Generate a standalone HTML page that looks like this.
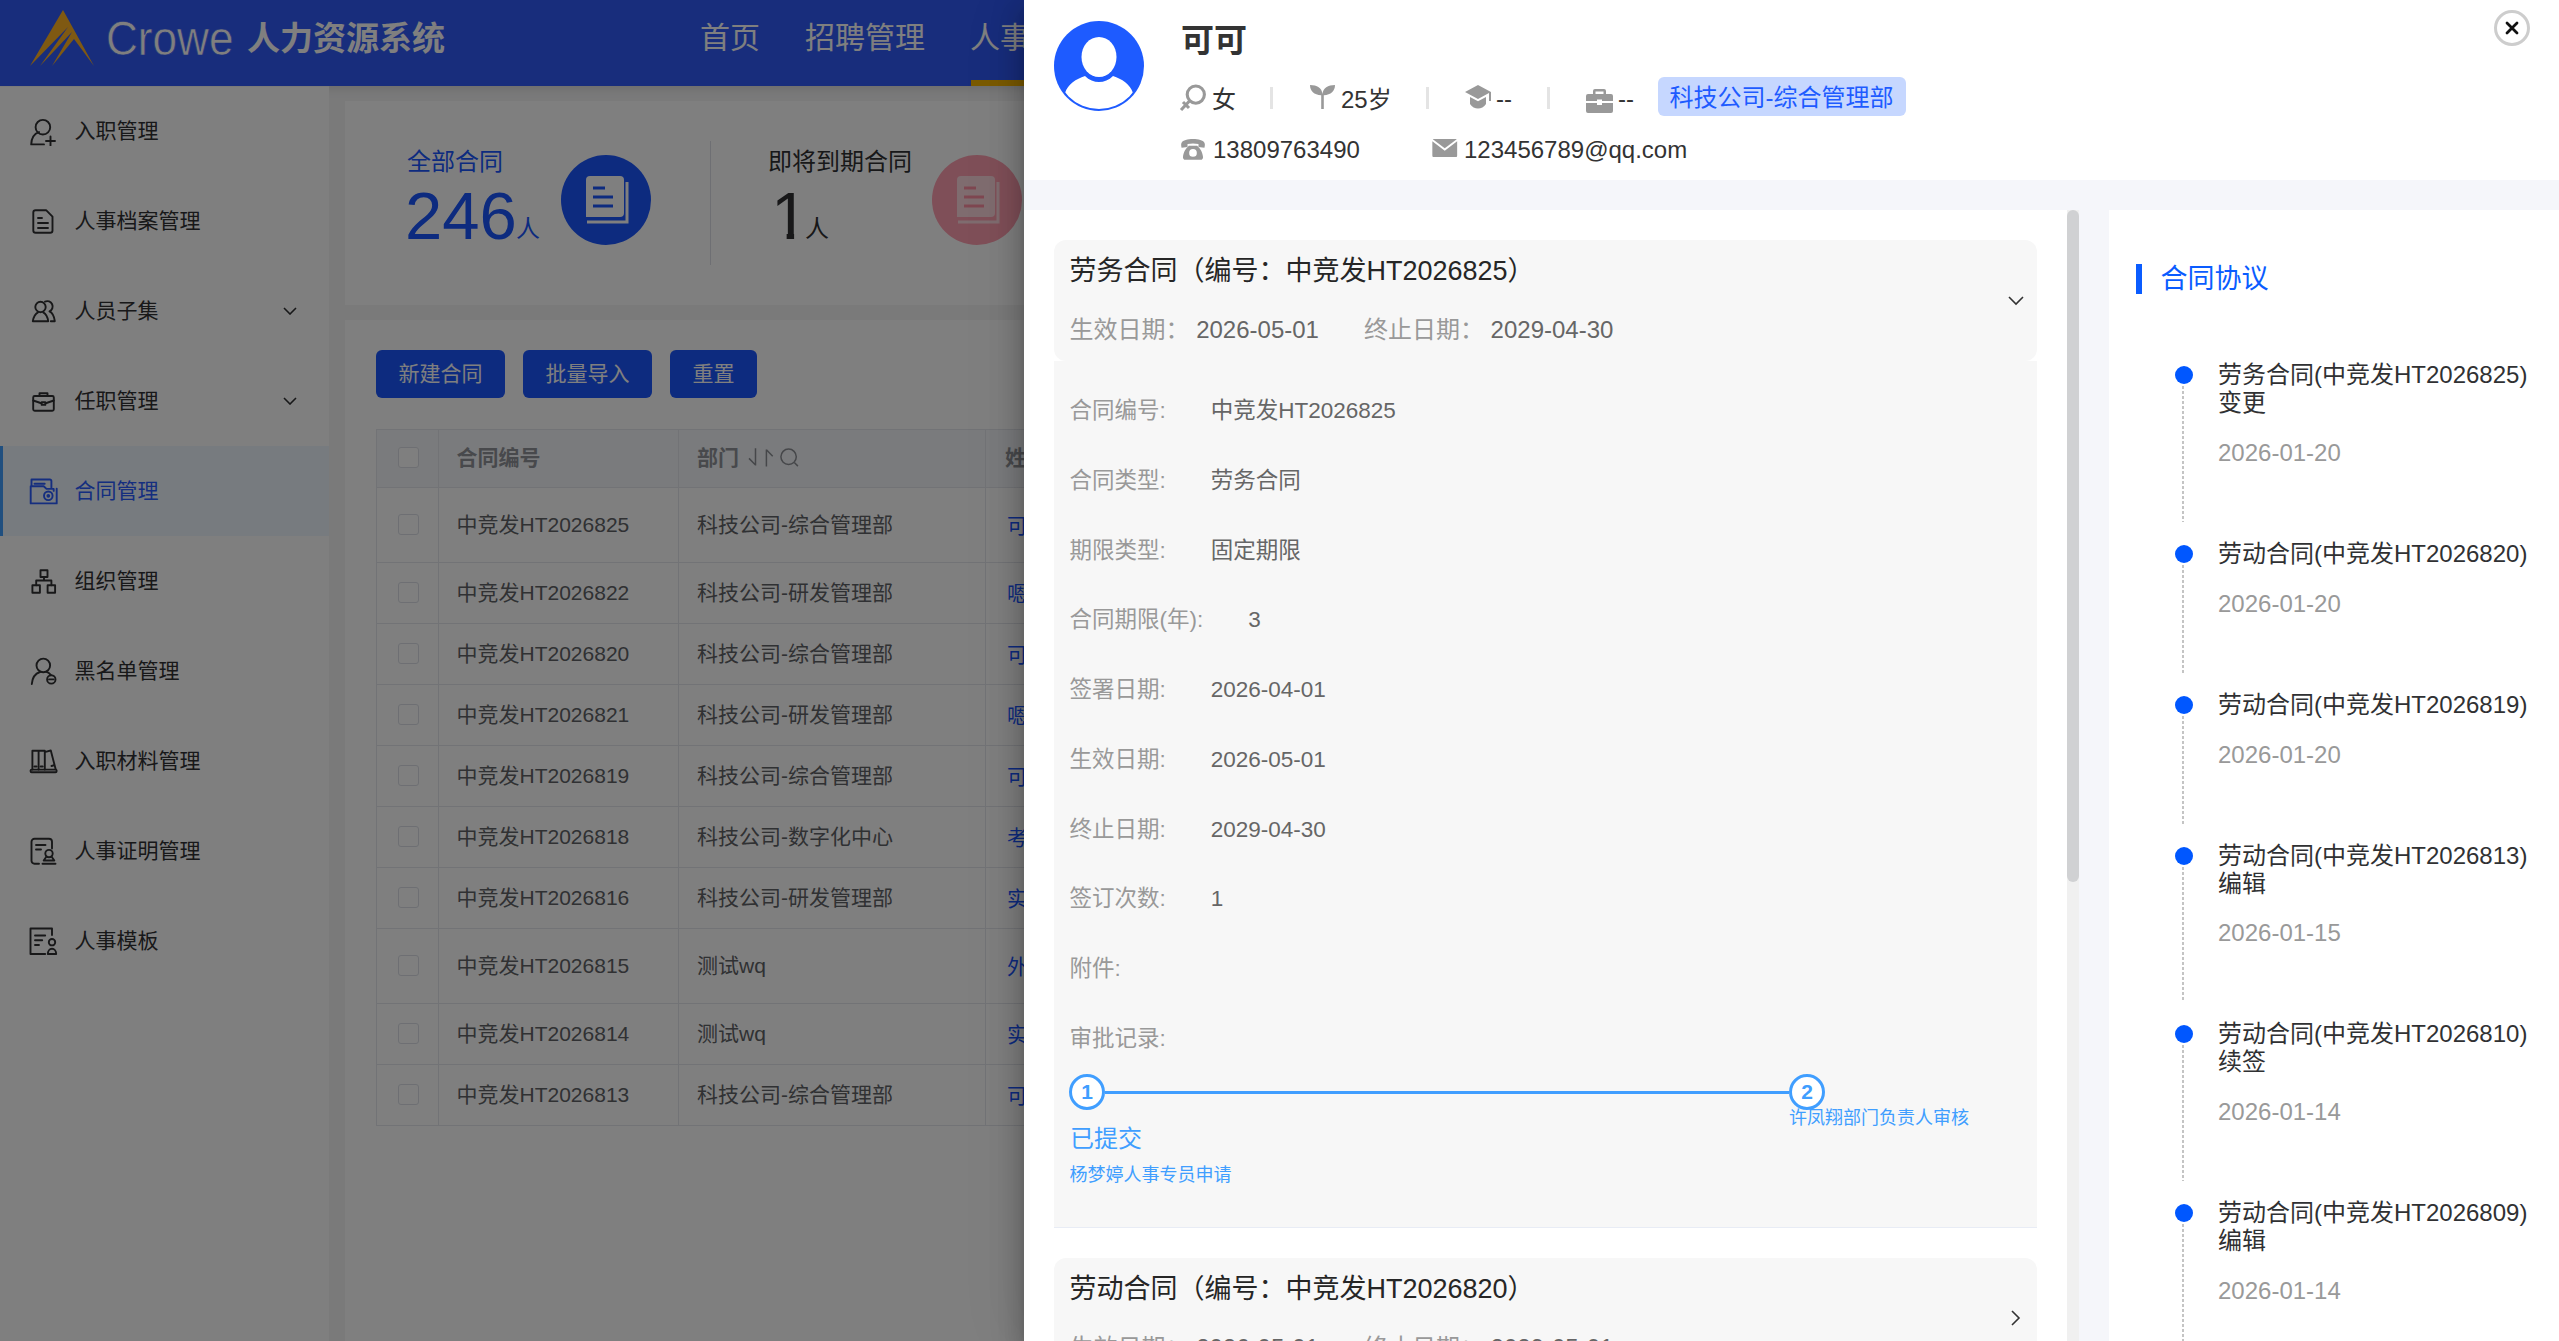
<!DOCTYPE html>
<html lang="zh-CN">
<head>
<meta charset="utf-8">
<title>人力资源系统</title>
<style>
*{box-sizing:border-box;margin:0;padding:0}
html,body{width:2559px;height:1341px;overflow:hidden;background:#f4f4f5}
body{position:relative;font-family:"Liberation Sans","Noto Sans CJK SC",sans-serif;color:#303133;-webkit-font-smoothing:antialiased}
.abs{position:absolute}
.t{position:absolute;white-space:nowrap;line-height:1;transform:translateY(-50%)}
/* ---------- background app ---------- */
#hdr{position:absolute;left:0;top:0;width:2559px;height:86px;background:#315bf8;box-shadow:0 2px 10px rgba(0,0,0,.13);z-index:2}
#side{position:absolute;left:0;top:86px;width:329px;height:1255px;background:#fff;z-index:3;border-top:1px solid #f4f4f4}
.mi{position:absolute;left:0;width:329px;height:90px;margin-top:-1px}
.mi .t{left:74.5px;top:43.5px;font-size:21px;color:#303133}
.mi svg.ic{position:absolute;left:28px;top:30px;width:30px;height:30px;fill:none;stroke:#303133;stroke-width:1.9;stroke-linecap:round;stroke-linejoin:round}
.mi svg.ar{position:absolute;left:283px;top:41px;width:14px;height:8px;fill:none;stroke:#303133;stroke-width:1.6}
.mi.on{background:#eef6ff;border-left:3px solid #409eff}
.mi.on .t{color:#2a5cff;left:71.5px}
.mi.on svg.ic{stroke:#2a5cff;left:25px}
.card{position:absolute;background:#fff}
.btn{position:absolute;top:350px;height:48px;background:#1a56ff;border-radius:6px;color:#fff;font-size:21px;line-height:48px;text-align:center}
#tbl{position:absolute;left:376px;top:428.5px;width:700px;height:697px;border:1px solid #e4e7ed;border-right:0;background:#fff}
.tr{position:absolute;left:0;width:700px;border-bottom:1px solid #e4e7ed}
.tr .t{font-size:21px;color:#606266;top:calc(50% - 1px)}
.th{background:#f5f7fa}
.th .t{font-weight:bold;color:#909399}
.vl{position:absolute;top:0;width:1px;height:695px;background:#e4e7ed}
.cb{position:absolute;left:21px;top:50%;margin-top:-11px;width:21px;height:21px;border:1px solid #dcdfe6;border-radius:3px;background:#fff}
.lk{color:#1a56ff !important;margin-top:1.5px}
#mask{position:absolute;left:0;top:0;width:2559px;height:1341px;background:rgba(0,0,0,.5);z-index:5}
/* ---------- drawer ---------- */
#dr{position:absolute;left:1024px;top:0;width:1535px;height:1341px;background:#f5f6fa;z-index:10;box-shadow:0 8px 10px -5px rgba(0,0,0,.2),0 16px 24px 2px rgba(0,0,0,.14),0 6px 30px 5px rgba(0,0,0,.12),-10px 0 60px 0 rgba(0,0,0,.055);overflow:hidden}
#dr .t{color:#303133}

.dv{position:absolute;top:87px;width:2.5px;height:22px;background:#e4e4e4}
.v{color:#666}
.rw{left:45.5px;font-size:22.5px;color:#999 !important;margin-top:1px}
.rw .v{margin-left:45px}
.stp{position:absolute;top:1074px;width:36px;height:36px;border-radius:50%;border:3px solid #409eff;background:#fff;color:#409eff;font-weight:bold;font-size:21px;line-height:30px;text-align:center}
.dot{position:absolute;left:1151px;width:18px;height:18px;border-radius:50%;background:#0057ff}
.tail{position:absolute;left:1158px;width:2px;background:repeating-linear-gradient(to bottom,#c4c4c4 0,#c4c4c4 3px,transparent 3px,transparent 5px)}
.tlt{left:1194px;font-size:24px;color:#303133}
.tld{left:1194px;font-size:24px;color:#999 !important}
</style>
</head>
<body>
<!-- HEADER -->
<div id="hdr">
  <svg class="abs" style="left:28px;top:8px" width="68" height="60" viewBox="0 0 68 60"><path d="M35 2 L66 58 L46 31 L24 58 L44 24 L12 58 L40 19 L2 58 Z" fill="#ffb224"/></svg>
  <div class="t" style="left:106px;top:37.5px;font-size:49px;color:#fff;-webkit-text-stroke:.6px #315bf8;transform:translateY(-50%) scaleX(.9);transform-origin:0 50%">Crowe</div>
  <div class="t" style="left:247px;top:38px;font-size:33px;font-weight:bold;color:#fff">人力资源系统</div>
  <div class="t" style="left:700px;top:37.5px;font-size:30px;color:#fff">首页</div>
  <div class="t" style="left:805px;top:37.5px;font-size:30px;color:#fff">招聘管理</div>
  <div class="t" style="left:970px;top:37.5px;font-size:30px;color:#fff">人事管理</div>
  <div class="abs" style="left:971px;top:80px;width:118px;height:6px;background:#f5b400"></div>
</div>
<!-- SIDEBAR -->
<div id="side">
  <div class="mi" style="top:0px"><svg class="ic" viewBox="0 0 30 30"><circle cx="14.9" cy="11.2" r="7.3"/><path d="M3.200 28.400c.200-6.800 3.400-10.800 7.800-12.300M3.200 28.400h12.800M22.500 20.500v9M18 25h9"/></svg><div class="t">入职管理</div></div>
  <div class="mi" style="top:90px"><svg class="ic" viewBox="0 0 30 30"><path d="M5.300 6.500a2.300 2.300 0 0 1 2.300-2.300h10.500l6.400 6.400v13.800a2.300 2.300 0 0 1-2.300 2.300H7.600a2.300 2.300 0 0 1-2.300-2.300zM10 12h4M10 17h10M10 22h10"/></svg><div class="t">人事档案管理</div></div>
  <div class="mi" style="top:180px"><svg class="ic" viewBox="0 0 30 30"><circle cx="12.500" cy="11" r="5.200"/><path d="M4.800 25.200c.8-4.500 2.800-7.500 5.200-8.800M4.800 25.200h15.400c-.6-4.300-2.400-7.300-5-8.800M17 5.600a5.200 5.200 0 0 1 4.500 9.800c2.700 1.400 4.700 4.600 5.300 9.800h-4"/></svg><div class="t">人员子集</div><svg class="ar" viewBox="0 0 14 8"><path d="M1 1l6 6 6-6"/></svg></div>
  <div class="mi" style="top:270px"><svg class="ic" viewBox="0 0 30 30"><rect x="5.200" y="10" width="20.600" height="14.700" rx="1.500"/><path d="M11.500 10V7.200h8V10M5.200 14.500l10.300 3.500 10.300-3.500"/><path d="M13.700 16.300h3.600v2.600h-3.600z" fill="#fff"/></svg><div class="t">任职管理</div><svg class="ar" viewBox="0 0 14 8"><path d="M1 1l6 6 6-6"/></svg></div>
  <div class="mi on" style="top:360px"><svg class="ic" viewBox="0 0 30 30"><path d="M3.500 10V3.500h18.400a1.500 1.500 0 0 1 1.500 1.500v7.500M6.500 7.700h10.200M2.700 10.300h13l2.800 2.600h7.200v2M28.700 12.600v14.800h-26V10.300"/><circle cx="20.300" cy="19.800" r="4.300"/><circle cx="20.300" cy="19.800" r=".9" fill="#2a5cff"/></svg><div class="t">合同管理</div></div>
  <div class="mi" style="top:450px"><svg class="ic" viewBox="0 0 30 30"><rect x="12.500" y="4.300" width="7" height="6.700"/><rect x="4.400" y="19.200" width="7.500" height="7.500"/><rect x="19.600" y="19.200" width="7.500" height="7.500"/><path d="M16 11v3.500M8.200 19.200v-4.700h15.200v4.700"/></svg><div class="t">组织管理</div></div>
  <div class="mi" style="top:540px"><svg class="ic" viewBox="0 0 30 30"><circle cx="15.300" cy="9.400" r="6.800"/><path d="M3.800 28c.5-6.500 3.700-10.500 8.200-12M18.500 15.800c1.800.6 3.200 1.700 4.200 3.100"/><circle cx="23.300" cy="23.400" r="4.200"/><path d="M21 23.400h4.600"/></svg><div class="t">黑名单管理</div></div>
  <div class="mi" style="top:630px"><svg class="ic" viewBox="0 0 30 30"><path d="M4.400 23.600V4.800h6.200v18.800M10.600 4.800h6.200v18.800M17.500 5.800l5.300-1.300 4.800 18.600M6.500 20.500h2M12.700 20.500h2M23.500 20l1.800-.5"/><rect x="2.600" y="23.600" width="26" height="2.600" rx="1"/></svg><div class="t">入职材料管理</div></div>
  <div class="mi" style="top:720px"><svg class="ic" viewBox="0 0 30 30"><path d="M11 27.800H6.500a3 3 0 0 1-3-3V5.800a3 3 0 0 1 3-3H21a3 3 0 0 1 3 3v6.700M8 9h9.500M8 13.500h5"/><circle cx="21" cy="17.600" r="3.700"/><path d="M18.500 20.500l-2.800 4h10.600l-2.800-4M14.500 27.800h13"/></svg><div class="t">人事证明管理</div></div>
  <div class="mi" style="top:810px"><svg class="ic" viewBox="0 0 30 30"><path d="M17.200 28H2.500V2.500H24V9M7 9.500h10.200M7 14.300h7.200M7 19h4"/><circle cx="24" cy="16.200" r="3.200"/><path d="M19.800 28c0-3 1.800-5.200 4.200-5.200s4.200 2.200 4.200 5.200z"/></svg><div class="t">人事模板</div></div>
</div>
<!-- MAIN -->
<div class="card" style="left:345px;top:101px;width:2200px;height:204px">
  <div class="t" style="left:62px;top:61px;font-size:24px;color:#1a56ff">全部合同</div>
  <div class="t" style="left:60px;top:114px;font-size:67px;color:#1a56ff">246</div>
  <div class="t" style="left:171px;top:128px;font-size:24px;color:#1a56ff">人</div>
  <div class="abs" style="left:216px;top:54px;width:90px;height:90px;border-radius:50%;background:#1a56ff"></div>
  <svg class="abs" style="left:240px;top:74px" width="44" height="50" viewBox="0 0 44 50"><path d="M5 1h30a4 4 0 0 1 4 4v33a4 4 0 0 1-4 4H1V5a4 4 0 0 1 4-4z" fill="#fff"/><path d="M42 7v40H2" fill="none" stroke="#fff" stroke-width="3"/><path d="M8 13h12M8 22h20M8 31h20" stroke="#1a56ff" stroke-width="3"/></svg>
  <div class="abs" style="left:365px;top:40px;width:1px;height:124px;background:#dcdfe6"></div>
  <div class="t" style="left:423px;top:61px;font-size:24px;color:#303133">即将到期合同</div>
  <div class="t" style="left:426px;top:114px;font-size:67px;color:#303133;clip-path:polygon(0 0,100% 0,100% 75%,62% 75%,62% 100%,42% 100%,42% 75%,0 75%)">1</div>
  <div class="t" style="left:460px;top:128px;font-size:24px;color:#303133">人</div>
  <div class="abs" style="left:587px;top:54px;width:90px;height:90px;border-radius:50%;background:#ff9fb0"></div>
  <svg class="abs" style="left:611px;top:74px" width="44" height="50" viewBox="0 0 44 50"><path d="M5 1h30a4 4 0 0 1 4 4v33a4 4 0 0 1-4 4H1V5a4 4 0 0 1 4-4z" fill="#ffd9df"/><path d="M42 7v40H2" fill="none" stroke="#ffd9df" stroke-width="3"/><path d="M8 13h12M8 22h20M8 31h20" stroke="#ff8fa3" stroke-width="3"/></svg>
</div>
<div class="card" style="left:345px;top:320px;width:2200px;height:1040px"></div>
<div class="btn" style="left:376px;width:129px">新建合同</div>
<div class="btn" style="left:523px;width:129px">批量导入</div>
<div class="btn" style="left:670px;width:87px">重置</div>
<div id="tbl">
<div class="tr th" style="top:0;height:58px"><i class="cb"></i><div class="t" style="left:79.5px">合同编号</div><div class="t" style="left:320px">部门</div><svg class="abs" style="left:368px;top:16.5px" width="58" height="24" viewBox="0 0 58 24" fill="none" stroke="#8c8f95" stroke-width="1.5"><path d="M10.500 2.300V19.600M4 12.400l6.500 6.600M21.400 20.600V3.400M21.400 3.700l6.300 6.600"/><circle cx="43.600" cy="10.800" r="7.700"/><path d="M49.300 16.500l3.600 3.600"/></svg><div class="t" style="left:628px">姓名</div></div>
<div class="tr" style="top:58px;height:75px"><i class="cb"></i><div class="t" style="left:79.5px">中竞发HT2026825</div><div class="t" style="left:320px">科技公司-综合管理部</div><div class="t lk" style="left:630px">可可</div></div>
<div class="tr" style="top:133px;height:61px"><i class="cb"></i><div class="t" style="left:79.5px">中竞发HT2026822</div><div class="t" style="left:320px">科技公司-研发管理部</div><div class="t lk" style="left:630px">嗯嗯</div></div>
<div class="tr" style="top:194px;height:61px"><i class="cb"></i><div class="t" style="left:79.5px">中竞发HT2026820</div><div class="t" style="left:320px">科技公司-综合管理部</div><div class="t lk" style="left:630px">可可</div></div>
<div class="tr" style="top:255px;height:61px"><i class="cb"></i><div class="t" style="left:79.5px">中竞发HT2026821</div><div class="t" style="left:320px">科技公司-研发管理部</div><div class="t lk" style="left:630px">嗯嗯</div></div>
<div class="tr" style="top:316px;height:61px"><i class="cb"></i><div class="t" style="left:79.5px">中竞发HT2026819</div><div class="t" style="left:320px">科技公司-综合管理部</div><div class="t lk" style="left:630px">可可</div></div>
<div class="tr" style="top:377px;height:61px"><i class="cb"></i><div class="t" style="left:79.5px">中竞发HT2026818</div><div class="t" style="left:320px">科技公司-数字化中心</div><div class="t lk" style="left:630px">考勤</div></div>
<div class="tr" style="top:438px;height:61px"><i class="cb"></i><div class="t" style="left:79.5px">中竞发HT2026816</div><div class="t" style="left:320px">科技公司-研发管理部</div><div class="t lk" style="left:630px">实习生</div></div>
<div class="tr" style="top:499px;height:75px"><i class="cb"></i><div class="t" style="left:79.5px">中竞发HT2026815</div><div class="t" style="left:320px">测试wq</div><div class="t lk" style="left:630px">外包</div></div>
<div class="tr" style="top:574px;height:61px"><i class="cb"></i><div class="t" style="left:79.5px">中竞发HT2026814</div><div class="t" style="left:320px">测试wq</div><div class="t lk" style="left:630px">实习生</div></div>
<div class="tr" style="top:635px;height:61px"><i class="cb"></i><div class="t" style="left:79.5px">中竞发HT2026813</div><div class="t" style="left:320px">科技公司-综合管理部</div><div class="t lk" style="left:630px">可可</div></div>
<i class="vl" style="left:61px"></i>
<i class="vl" style="left:301px"></i>
<i class="vl" style="left:608px"></i>
</div>
<div id="mask"></div>
<!-- DRAWER -->
<div id="dr">
  <div class="abs" style="left:0;top:0;width:1535px;height:180px;background:#fff"></div>
  <!-- avatar -->
  <svg class="abs" style="left:30px;top:21px" width="90" height="90" viewBox="0 0 90 90"><defs><clipPath id="avc"><circle cx="45" cy="45" r="43"/></clipPath></defs><circle cx="45" cy="45" r="45" fill="#1e5bff"/><g clip-path="url(#avc)" fill="#fff"><ellipse cx="45" cy="36" rx="17.5" ry="20"/><path d="M11 72c3-9 11-14 20-17 4 4 9 6 14 6s10-2 14-6c9 3 17 8 20 17-8 10-20 17-34 17S19 82 11 72z"/></g></svg>
  <div class="t" style="left:157px;top:40px;font-size:33px;font-weight:bold;color:#333">可可</div>
  <!-- row 2 -->
  <svg class="abs" style="left:155px;top:84px" width="28" height="28" viewBox="0 0 28 28" fill="none" stroke="#999" stroke-width="3.1"><circle cx="16.8" cy="10.6" r="8.6"/><path d="M10.5 17L2 26M4 18l6 6"/></svg>
  <div class="t" style="left:188px;top:99.5px;font-size:24px;color:#333">女</div>
  <i class="dv" style="left:246px"></i>
  <svg class="abs" style="left:285px;top:84px" width="27" height="26" viewBox="0 0 27 26"><path d="M13.5 10C13 4 8 1 1 1c0 6 4 10 11.2 10.2V25h2.6V11.2C22 11 26 7 26 1 19 1 14 4 13.5 10z" fill="#999"/></svg>
  <div class="t" style="left:317px;top:99.5px;font-size:24px;color:#333">25岁</div>
  <i class="dv" style="left:402px"></i>
  <svg class="abs" style="left:440px;top:84px" width="28" height="26" viewBox="0 0 28 26" fill="#999"><path d="M14 1L1 8l13 7 11-6v8h2V8z"/><path d="M6 13v7c2 3 5 4.500 8 4.500s6-1.500 8-4.500v-7l-8 4.300z"/></svg>
  <div class="t" style="left:472px;top:99px;font-size:24px;color:#333">--</div>
  <i class="dv" style="left:523px"></i>
  <svg class="abs" style="left:562px;top:89px" width="27" height="24" viewBox="0 0 27 24" fill="#999"><path d="M9 0h9a2 2 0 0 1 2 2v3h5a2 2 0 0 1 2 2v5H16v-1.500h-5V12H0V7a2 2 0 0 1 2-2h5V2a2 2 0 0 1 2-2zm.5 2.500V5h8V2.500zM0 14h11v2h5v-2h11v8a2 2 0 0 1-2 2H2a2 2 0 0 1-2-2z"/></svg>
  <div class="t" style="left:594px;top:99px;font-size:24px;color:#333">--</div>
  <div class="abs" style="left:634px;top:77px;width:248px;height:39px;border-radius:6px;background:#c6d7ff"></div>
  <div class="t" style="left:645.500px;top:98px;font-size:24px;color:#1e5bff">科技公司-综合管理部</div>
  <!-- row 3 -->
  <svg class="abs" style="left:157px;top:138.700px" width="24" height="21" viewBox="0 0 26 23" fill="#999"><path d="M13 0c6 0 11 1.500 12.500 4 .8 1.500.5 4 0 5.500l-6.500-.8V5.500C17 5 15 4.800 13 4.800S9 5 7 5.500v3.200L.5 9.500C0 8-.3 5.500.5 4 2 1.500 7 0 13 0z"/><path d="M8.500 7.500h9c3 2.500 6 6.500 6.500 12.500 0 1.700-1 2.800-2.500 2.800h-17C3 22.800 2 21.700 2 20c.5-6 3.500-10 6.500-12.500zM13 11a4.200 4.200 0 1 0 0 8.400 4.200 4.200 0 0 0 0-8.400z" fill-rule="evenodd"/></svg>
  <div class="t" style="left:189px;top:150px;font-size:24px;color:#333">13809763490</div>
  <svg class="abs" style="left:408.300px;top:138.800px" width="25.500" height="18.400" viewBox="0 0 27 20" fill="#999"><path d="M1 0h25l.5.300L13.500 10 .5.300z"/><path d="M0 2.500l13.500 10.200L27 2.500V18a2 2 0 0 1-2 2H2a2 2 0 0 1-2-2z"/></svg>
  <div class="t" style="left:440px;top:150px;font-size:24px;color:#333">123456789@qq.com</div>
  <!-- close -->
  <div class="abs" style="left:1470px;top:10px;width:36px;height:36px;border-radius:50%;border:3px solid #cdcdcd;background:#fff"></div>
  <svg class="abs" style="left:1481px;top:21px" width="14" height="14" viewBox="0 0 14 14" fill="none" stroke="#111" stroke-width="2.800" stroke-linecap="round"><path d="M2 2l10 10M12 2L2 12"/></svg>

  <!-- left panel -->
  <div class="abs" style="left:0;top:210px;width:1043px;height:1131px;background:#fff"></div>
  <div class="abs" style="left:1043px;top:210px;width:12px;height:1131px;background:#f0f0f0"></div>
  <div class="abs" style="left:1043px;top:210px;width:12px;height:672px;border-radius:6px;background:#d0d1d3"></div>
  <!-- card 1 -->
  <div class="abs" style="left:30px;top:240px;width:983px;height:121px;border-radius:12px;background:#f7f7f7"></div>
  <div class="t" style="left:45.500px;top:271px;font-size:27px;color:#262626">劳务合同（编号：中竞发HT2026825）</div>
  <div class="t" style="left:45.500px;top:330px;font-size:24px;color:#999">生效日期： <span class="v">2026-05-01</span><span style="margin-left:45px">终止日期： </span><span class="v">2029-04-30</span></div>
  <svg class="abs" style="left:984px;top:296px" width="16" height="10" viewBox="0 0 16 10" fill="none" stroke="#333" stroke-width="1.600"><path d="M1 1l7 7 7-7"/></svg>
  <div class="abs" style="left:30px;top:361px;width:983px;height:867px;background:#f7f7f7;border-bottom:1px solid #e8ecf5"></div>
  <div class="t rw" style="top:410.00px">合同编号:<span class="v">中竞发HT2026825</span></div>
  <div class="t rw" style="top:479.75px">合同类型:<span class="v">劳务合同</span></div>
  <div class="t rw" style="top:549.50px">期限类型:<span class="v">固定期限</span></div>
  <div class="t rw" style="top:619.25px">合同期限(年):<span class="v">3</span></div>
  <div class="t rw" style="top:689.00px">签署日期:<span class="v">2026-04-01</span></div>
  <div class="t rw" style="top:758.75px">生效日期:<span class="v">2026-05-01</span></div>
  <div class="t rw" style="top:828.50px">终止日期:<span class="v">2029-04-30</span></div>
  <div class="t rw" style="top:898.25px">签订次数:<span class="v">1</span></div>
  <div class="t rw" style="top:968.00px">附件:<span class="v"></span></div>
  <div class="t rw" style="top:1037.75px">审批记录:<span class="v"></span></div>
  <!-- steps -->
  <div class="abs" style="left:81px;top:1091px;width:684px;height:3px;background:#409eff"></div>
  <div class="stp" style="left:45px">1</div>
  <div class="stp" style="left:765px">2</div>
  <div class="t" style="left:46px;top:1139px;font-size:24px;color:#409eff">已提交</div>
  <div class="t" style="left:45.500px;top:1174.500px;font-size:18px;color:#409eff">杨梦婷人事专员申请</div>
  <div class="t" style="left:765px;top:1117.500px;font-size:18px;color:#409eff">许凤翔部门负责人审核</div>
  <!-- card 2 -->
  <div class="abs" style="left:30px;top:1257.500px;width:983px;height:121px;border-radius:12px;background:#f7f7f7"></div>
  <div class="t" style="left:45.500px;top:1288.500px;font-size:27px;color:#262626">劳动合同（编号：中竞发HT2026820）</div>
  <div class="t" style="left:45.500px;top:1347.500px;font-size:24px;color:#999">生效日期： <span class="v">2026-05-01</span><span style="margin-left:45px">终止日期： </span><span class="v">2029-05-01</span></div>
  <svg class="abs" style="left:987px;top:1310px" width="10" height="16" viewBox="0 0 10 16" fill="none" stroke="#333" stroke-width="1.600"><path d="M1 1l7 7-7 7"/></svg>

  <!-- right panel -->
  <div class="abs" style="left:1085px;top:210px;width:450px;height:1131px;background:#fff"></div>
  <div class="abs" style="left:1112px;top:264px;width:6px;height:30px;background:#0a5cff"></div>
  <div class="t" style="left:1136.500px;top:279px;font-size:27px;color:#0a5cff">合同协议</div>
  <i class="dot" style="top:366px"></i><i class="tail" style="top:386px;height:136px"></i>
  <div class="t tlt" style="top:375px">劳务合同(中竞发HT2026825)</div>
  <div class="t tlt" style="top:403px">变更</div>
  <div class="t tld" style="top:453px">2026-01-20</div>
  <i class="dot" style="top:545px"></i><i class="tail" style="top:565px;height:108px"></i>
  <div class="t tlt" style="top:554px">劳动合同(中竞发HT2026820)</div>
  <div class="t tld" style="top:604px">2026-01-20</div>
  <i class="dot" style="top:696px"></i><i class="tail" style="top:716px;height:108px"></i>
  <div class="t tlt" style="top:705px">劳动合同(中竞发HT2026819)</div>
  <div class="t tld" style="top:755px">2026-01-20</div>
  <i class="dot" style="top:847px"></i><i class="tail" style="top:867px;height:135px"></i>
  <div class="t tlt" style="top:856px">劳动合同(中竞发HT2026813)</div>
  <div class="t tlt" style="top:884px">编辑</div>
  <div class="t tld" style="top:933px">2026-01-15</div>
  <i class="dot" style="top:1025px"></i><i class="tail" style="top:1045px;height:136px"></i>
  <div class="t tlt" style="top:1034px">劳动合同(中竞发HT2026810)</div>
  <div class="t tlt" style="top:1062px">续签</div>
  <div class="t tld" style="top:1112px">2026-01-14</div>
  <i class="dot" style="top:1204px"></i><i class="tail" style="top:1224px;height:144px"></i>
  <div class="t tlt" style="top:1213px">劳动合同(中竞发HT2026809)</div>
  <div class="t tlt" style="top:1241px">编辑</div>
  <div class="t tld" style="top:1291px">2026-01-14</div>
</div>

</body>
</html>
